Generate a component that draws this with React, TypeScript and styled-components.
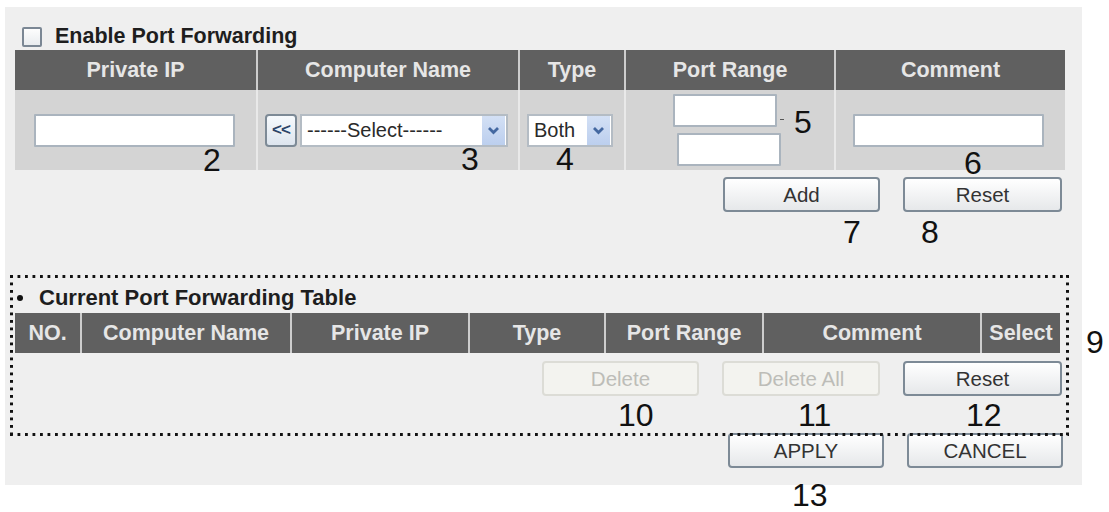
import React from 'react'
import styled, {createGlobalStyle} from 'styled-components'

const GlobalStyle = createGlobalStyle`
  html, body, #root {
    margin: 0;
    padding: 0;
    min-height: 100%;
    height: 100%;
    background-color: #fff;
    font-family: "Liberation Sans", Arial, sans-serif;
  }
  * { box-sizing: border-box; }
`

const Page = styled.div`
  min-height: 100vh;
  padding: 7px 0 0 5px;
  overflow: hidden;
`

const Panel = styled.div`
  position: relative;
  width: 1077px;
  height: 478px;
  padding-top: 16px;
  background-color: #efefef;
  display: flex;
  flex-direction: column;
`

const TitleRow = styled.label`
  display: flex;
  align-items: center;
  gap: 13px;
  height: 27px;
  padding-left: 17px;
  font-size: 21.5px;
  font-weight: bold;
  color: #1e1e1e;
`

const CheckBox = styled.span`
  display: block;
  width: 20px;
  height: 20px;
  border: 2px solid #7b8794;
  border-radius: 2px;
  background: linear-gradient(#fdfdfd, #e9ecef);
`

const HeaderRow = styled.div<{ $cols: string; $ml?: number }>`
  display: grid;
  grid-template-columns: ${p => p.$cols};
  height: 40px;
  margin-left: ${p => p.$ml ?? 0}px;
  background-color: #606060;
  align-self: flex-start;
`

const HeadCell = styled.div`
  display: flex;
  align-items: center;
  justify-content: center;
  color: #e6e6e6;
  font-size: 21.5px;
  font-weight: bold;
  white-space: nowrap;

  & + & { border-left: 2px solid #cdcdcd; }
`

const BodyRow = styled.div<{ $cols: string }>`
  display: grid;
  grid-template-columns: ${p => p.$cols};
  height: 80px;
  margin-left: 10px;
  background-color: #d4d4d4;
  align-self: flex-start;
`

const BodyCell = styled.div<{ $pl?: number }>`
  display: flex;
  align-items: center;
  padding-left: ${p => p.$pl ?? 0}px;
  gap: 3px;

  & + & { border-left: 2px solid #e9e9e9; }
`

const PortCell = styled(BodyCell)`
  flex-direction: column;
  align-items: flex-start;
  justify-content: center;
  gap: 6px;
`

const TextBox = styled.input<{ $w: number; $shift?: number }>`
  display: block;
  width: ${p => p.$w}px;
  height: 33px;
  margin: 0 0 0 ${p => p.$shift ?? 0}px;
  border: 2px solid #aab4be;
  border-radius: 1px;
  background-color: #fff;
  outline: none;
`

const Dash = styled.span`
  position: absolute;
  left: 107px;
  top: -14px;
  width: 4px;
  height: 1px;
  background-color: #555;
`

const PortLine = styled.div`
  position: relative;
`

const SmallButton = styled.button`
  width: 32px;
  height: 33px;
  padding: 0;
  border: 2px solid #7d8a96;
  border-radius: 4px;
  background: linear-gradient(#f7fafd, #dde5ee);
  color: #2c4468;
  font-family: inherit;
  font-size: 17px;
  font-weight: bold;
  letter-spacing: -1px;
`

const FakeSelect = styled.div<{ $w: number }>`
  display: flex;
  align-items: center;
  width: ${p => p.$w}px;
  height: 33px;
  padding: 0 1px 0 5px;
  border: 2px solid #b4bcc4;
  background-color: #fff;
  color: #2a2a2a;
  font-size: 20px;
  white-space: nowrap;

  > span.text { flex: 1; overflow: hidden; }
`

const Arrow = styled.span`
  display: flex;
  align-items: center;
  justify-content: center;
  width: 23px;
  height: 29px;
  background: linear-gradient(#d3e0f5, #bccfee);
`

const ActionRow = styled.div<{ $mt: number; $pr: number }>`
  display: flex;
  justify-content: flex-end;
  gap: 23px;
  margin-top: ${p => p.$mt}px;
  padding-right: ${p => p.$pr}px;
`

const Button = styled.button<{ $w: number }>`
  width: ${p => p.$w}px;
  height: 35px;
  padding: 0;
  border: 2px solid #7d8a96;
  border-radius: 4px;
  background: linear-gradient(#ffffff, #e6e8ea);
  color: #333;
  font-family: inherit;
  font-size: 20.5px;

  &:disabled {
    border-color: #dcdcd6;
    background: #f3f3ef;
    color: #bdbdb8;
  }
`

const DottedBox = styled.div`
  position: relative;
  z-index: 2;
  width: 1059px;
  height: 161px;
  margin: 63px 0 0 5px;
  padding: 3px;
  display: flex;
  flex-direction: column;
  background-image:
    linear-gradient(to right, #111 3px, transparent 3px),
    linear-gradient(to right, #111 3px, transparent 3px),
    linear-gradient(to bottom, #111 3px, transparent 3px),
    linear-gradient(to bottom, #111 3px, transparent 3px);
  background-size: 7.5px 3px, 7.5px 3px, 3px 7.5px, 3px 7.5px;
  background-position: 0 0, 0 100%, 0 0, 100% 0;
  background-repeat: repeat-x, repeat-x, repeat-y, repeat-y;
`

const SectionTitle = styled.div`
  display: flex;
  align-items: center;
  gap: 16px;
  height: 35px;
  padding: 4px 0 0 4px;
  font-size: 22px;
  font-weight: bold;
  color: #1e1e1e;

  &::before {
    content: '';
    width: 6px;
    height: 6px;
    border-radius: 50%;
    background-color: #111;
  }
`

// callout numbers drawn over the screenshot
const Callout = styled.span<{ $x: number; $y: number }>`
  position: absolute;
  z-index: 3;
  left: ${p => p.$x}px;
  top: ${p => p.$y}px;
  font-size: 32px;
  line-height: 28px;
  color: #111;
`

const ChevronDown = () => (
  <svg width="13" height="9" viewBox="0 0 13 9">
    <polyline points="2,2 6.5,6.5 11,2" fill="none" stroke="#4468a0" strokeWidth="2.8"/>
  </svg>
)

const addCols = '241px 262px 106px 210px 231px'
const listCols = '65px 210px 178px 136px 158px 218px 80px'

export default function App() {
  return (
    <Page>
      <GlobalStyle/>
      <Panel>
        <TitleRow>
          <CheckBox/>
          Enable Port Forwarding
        </TitleRow>

        <HeaderRow $cols={addCols} $ml={10}>
          <HeadCell>Private IP</HeadCell>
          <HeadCell>Computer Name</HeadCell>
          <HeadCell>Type</HeadCell>
          <HeadCell>Port Range</HeadCell>
          <HeadCell>Comment</HeadCell>
        </HeaderRow>
        <BodyRow $cols={addCols}>
          <BodyCell $pl={19}><TextBox $w={201}/></BodyCell>
          <BodyCell $pl={7}>
            <SmallButton>&lt;&lt;</SmallButton>
            <FakeSelect $w={208}>
              <span className="text">------Select------</span>
              <Arrow><ChevronDown/></Arrow>
            </FakeSelect>
          </BodyCell>
          <BodyCell $pl={7}>
            <FakeSelect $w={86}>
              <span className="text">Both</span>
              <Arrow><ChevronDown/></Arrow>
            </FakeSelect>
          </BodyCell>
          <PortCell $pl={47}>
            <TextBox $w={104}/>
            <PortLine>
              <Dash/>
              <TextBox $w={104} $shift={4}/>
            </PortLine>
          </PortCell>
          <BodyCell $pl={17}><TextBox $w={191}/></BodyCell>
        </BodyRow>

        <ActionRow $mt={7} $pr={20}>
          <Button $w={157}>Add</Button>
          <Button $w={159}>Reset</Button>
        </ActionRow>

        <DottedBox>
          <SectionTitle>Current Port Forwarding Table</SectionTitle>
          <HeaderRow $cols={listCols} $ml={2}>
            <HeadCell>NO.</HeadCell>
            <HeadCell>Computer Name</HeadCell>
            <HeadCell>Private IP</HeadCell>
            <HeadCell>Type</HeadCell>
            <HeadCell>Port Range</HeadCell>
            <HeadCell>Comment</HeadCell>
            <HeadCell>Select</HeadCell>
          </HeaderRow>
          <ActionRow $mt={8} $pr={4}>
            <Button $w={157} disabled>Delete</Button>
            <Button $w={158} disabled>Delete All</Button>
            <Button $w={159}>Reset</Button>
          </ActionRow>
        </DottedBox>

        <ActionRow $mt={-3} $pr={19}>
          <Button $w={156}>APPLY</Button>
          <Button $w={156}>CANCEL</Button>
        </ActionRow>

        <Callout $x={198} $y={139}>2</Callout>
        <Callout $x={456} $y={138}>3</Callout>
        <Callout $x={551} $y={138}>4</Callout>
        <Callout $x={789} $y={101}>5</Callout>
        <Callout $x={959} $y={142}>6</Callout>
        <Callout $x={838} $y={211}>7</Callout>
        <Callout $x={916} $y={211}>8</Callout>
        <Callout $x={1081} $y={321}>9</Callout>
        <Callout $x={613} $y={394}>10</Callout>
        <Callout $x={793} $y={394}>11</Callout>
        <Callout $x={961} $y={394}>12</Callout>
        <Callout $x={787} $y={474}>13</Callout>
      </Panel>
    </Page>
  )
}
